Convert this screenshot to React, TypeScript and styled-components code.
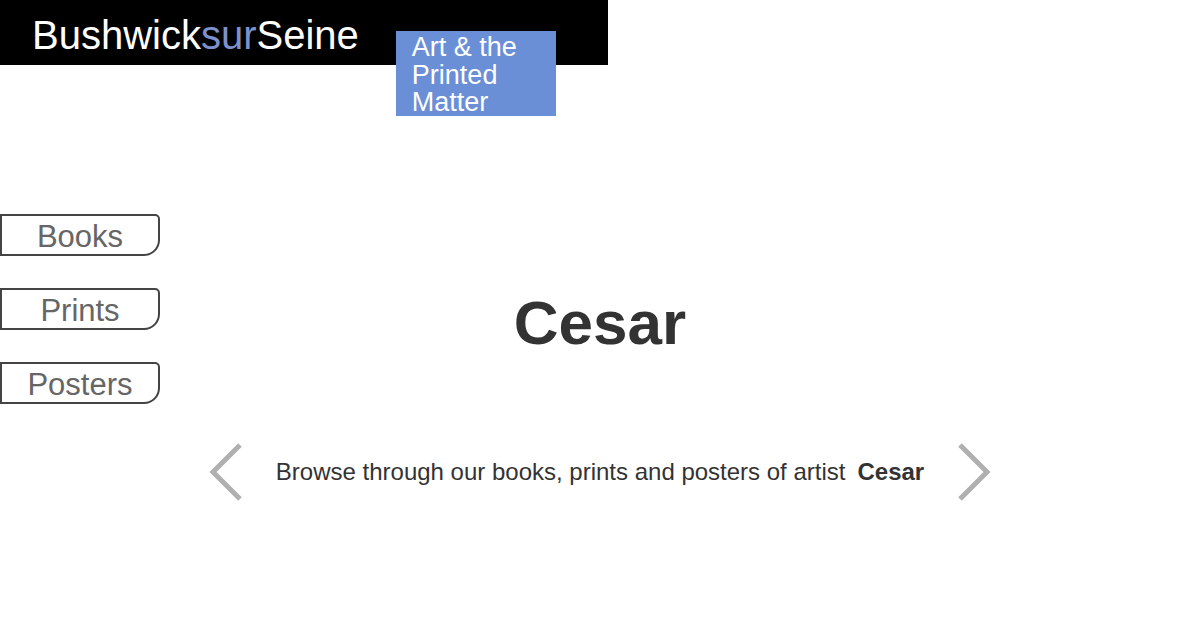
import styled, { createGlobalStyle } from 'styled-components'

const GlobalStyle = createGlobalStyle`
  html, body {
    margin: 0;
    padding: 0;
    background: #fff;
    font-family: 'Liberation Sans', Arial, sans-serif;
  }
`

const tabs = ['Books', 'Prints', 'Posters']

const Chevron = ({ dir }: { dir: 'left' | 'right' }) => (
  <svg width="34" height="58" viewBox="0 0 34 58">
    <polyline
      points={dir === 'left' ? '31,2 4,29 31,56' : '3,2 30,29 3,56'}
      fill="none"
      stroke="#b0b0b0"
      strokeWidth="5"
    />
  </svg>
)

const App = () => {
  return (
    <SPage>
      <GlobalStyle />
      <SHeader>
        <SLogo>
          Bushwick<span>sur</span>Seine
        </SLogo>
        <STagline>Art &amp; the Printed Matter</STagline>
      </SHeader>

      <SMain>
        <SNav>
          {tabs.map((t) => (
            <STab key={t}>{t}</STab>
          ))}
        </SNav>

        <SContent>
          <STitle>Cesar</STitle>
          <SBrowse>
            <SArrow aria-label="previous">
              <Chevron dir="left" />
            </SArrow>
            <SBrowseText>
              Browse through our books, prints and posters of artist
              <strong>Cesar</strong>
            </SBrowseText>
            <SArrow aria-label="next">
              <Chevron dir="right" />
            </SArrow>
          </SBrowse>
        </SContent>
      </SMain>
    </SPage>
  )
}

const SPage = styled.div`
  width: 1200px;
  height: 630px;
  overflow: hidden;
`

const SHeader = styled.header`
  display: flex;
  align-items: flex-start;
  width: 608px;
  height: 65px;
  box-sizing: border-box;
  padding-left: 32px;
  background: #000;
`

const SLogo = styled.div`
  padding-top: 12px;
  font-size: 40px;
  line-height: 46px;
  color: #fff;

  span {
    color: #7d91cf;
  }
`

const STagline = styled.div`
  width: 160px;
  height: 85px;
  box-sizing: border-box;
  margin-top: 31px;
  margin-left: 37px;
  padding: 3px 12px 0 16px;
  background: #6a8fd6;
  color: #fff;
  font-size: 27px;
  line-height: 27.5px;
`

const SMain = styled.main`
  display: grid;
  grid-template-columns: 160px 1fr 160px;
  padding-top: 149px;
`

const SNav = styled.nav`
  display: flex;
  flex-direction: column;
  gap: 32px;
`

const STab = styled.div`
  height: 42px;
  box-sizing: border-box;
  border: 2px solid #444;
  border-radius: 0 5px 16px 0;
  color: #666;
  font-size: 31px;
  line-height: 41px;
  text-align: center;
`

const SContent = styled.section`
  display: flex;
  flex-direction: column;
  align-items: center;
`

const STitle = styled.h1`
  margin: 73px 0 0;
  font-size: 62px;
  line-height: 71px;
  font-weight: 700;
  color: #333;
`

const SBrowse = styled.div`
  display: flex;
  align-items: center;
  gap: 33px;
  margin-top: 85px;
`

const SArrow = styled.button`
  display: flex;
  padding: 0;
  border: 0;
  background: none;
  cursor: pointer;
`

const SBrowseText = styled.p`
  margin: 0;
  font-size: 24px;
  color: #333;

  strong {
    margin-left: 12px;
    font-weight: 700;
  }
`

export default App
